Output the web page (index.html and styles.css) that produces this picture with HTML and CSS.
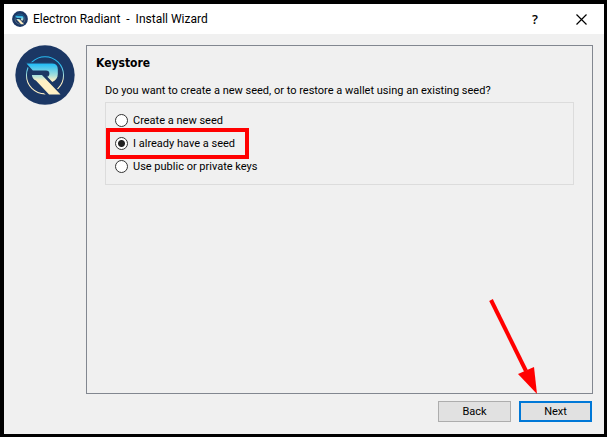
FILE: index.html
```html
<!DOCTYPE html>
<html lang="en">
<head>
    <meta charset="UTF-8">
    <title>Electron Radiant - Install Wizard</title>
    <link rel="stylesheet" href="styles.css">
</head>
<body>
    <svg class="defs" width="0" height="0" aria-hidden="true">
        <defs>
            <linearGradient id="shine" gradientUnits="userSpaceOnUse" x1="0" y1="50" x2="0" y2="158">
                <stop offset="0.2" stop-color="#27bdf5"/>
                <stop offset="0.5" stop-color="#a5dfdc"/>
                <stop offset="0.65" stop-color="#fff0c4"/>
            </linearGradient>
            <symbol id="logo" viewBox="16 14 178 178">
                <circle cx="105" cy="103" r="88" fill="#1b3764"/>
                <circle cx="105" cy="104" r="55" fill="none" stroke="url(#shine)" stroke-width="3"/>
                <path d="M46 67H126Q145 67 145 86V100Q145 118 126 126L108 107Q116 106 116 99Q116 92 108 92H68Z" fill="url(#shine)" stroke="#1b3764" stroke-width="4"/>
                <path d="M60 100H100L162 165H110L72 122Z" fill="#1b3764"/>
                <path d="M66 103H96L151 161H117L78 119Q68 116 66 103Z" fill="url(#shine)"/>
            </symbol>
        </defs>
    </svg>
    <div class="window">
        <header class="titlebar">
            <svg class="title-icon" aria-hidden="true"><use href="#logo"/></svg>
            <h1 class="title">Electron Radiant&nbsp; -&nbsp; Install Wizard</h1>
            <button class="title-btn" type="button" aria-label="Help">?</button>
            <button class="title-btn" type="button" aria-label="Close">
                <svg width="11" height="11" viewBox="0 0 11 11" aria-hidden="true">
                    <path d="M0.5 0.5L10.5 10.5M10.5 0.5L0.5 10.5" stroke="#000" stroke-width="1.2"/>
                </svg>
            </button>
        </header>
        <form class="wizard">
            <svg class="logo" aria-hidden="true"><use href="#logo"/></svg>
            <div class="main">
                <section class="panel">
                    <h2 class="heading">Keystore</h2>
                    <fieldset class="choices" aria-labelledby="question">
                        <p class="question" id="question">Do you want to create a new seed, or to restore a wallet using an existing seed?</p>
                        <div class="options">
                            <div class="option">
                                <input type="radio" name="keystore" id="create">
                                <label for="create">Create a new seed</label>
                            </div>
                            <div class="option marked">
                                <input type="radio" name="keystore" id="have" checked>
                                <label for="have">I already have a seed</label>
                            </div>
                            <div class="option">
                                <input type="radio" name="keystore" id="keys">
                                <label for="keys">Use public or private keys</label>
                            </div>
                        </div>
                    </fieldset>
                </section>
                <div class="buttons">
                    <button class="btn" type="button">Back</button>
                    <button class="btn btn-default" type="button">Next</button>
                    <svg class="arrow" width="52" height="98" viewBox="0 0 52 98" aria-hidden="true">
                        <path d="M5 3L40 74" stroke="#f00" stroke-width="4"/>
                        <path d="M51 97L32 77L48 70Z" fill="#f00"/>
                    </svg>
                </div>
            </div>
        </form>
    </div>
</body>
</html>
```
FILE: styles.css
```css
*{
    box-sizing: border-box;
    margin: 0;
    padding: 0;
}
body{
    min-height: 100vh;
    display: flex;
    padding: 4px 3px 3px 4px;
    background: #000;
    color: #000;
    font: 11px/14px Roboto, sans-serif;
}
.defs{
    position: absolute;
}
.window{
    flex: 1;
    display: flex;
    flex-direction: column;
    background: #f0f0f0;
}
.titlebar{
    height: 30px;
    display: flex;
    align-items: center;
    padding-left: 8px;
    background: #fff;
}
.title-icon{
    width: 16px;
    height: 16px;
}
.title{
    flex: 1;
    padding-left: 5px;
    font-size: 12px;
    font-weight: 400;
}
.title-btn{
    width: 46px;
    height: 30px;
    display: flex;
    align-items: center;
    justify-content: center;
    border: 0;
    background: none;
    font: 600 13px/16px "Open Sans", sans-serif;
}
.wizard{
    flex: 1;
    display: flex;
    align-items: flex-start;
    gap: 11px;
    padding: 11px;
}
.logo{
    flex: none;
    width: 60px;
    height: 60px;
}
.main{
    flex: 1;
    align-self: stretch;
    display: flex;
    flex-direction: column;
    gap: 7px;
}
.panel{
    flex: 1;
    padding: 10px 18px 10px 9px;
    border: 1px solid #828790;
}
.heading{
    font: bold 12px/14px "DejaVu Sans Condensed", "DejaVu Sans", sans-serif;
}
.choices{
    margin: 14px 0 0 9px;
    border: 0;
}
.question{
    margin-bottom: 4px;
}
.options{
    padding: 6px 9px;
    border: 1px solid #dcdcdc;
}
.option{
    position: relative;
    height: 23px;
    display: flex;
    align-items: center;
    gap: 5px;
}
.option input{
    appearance: none;
    width: 13px;
    height: 13px;
    border: 1px solid #333;
    border-radius: 50%;
    background: #fff;
}
.option input:checked{
    background: radial-gradient(circle, #222 3px, #fff 4px);
}
.marked::after{
    content: "";
    box-sizing: border-box;
    position: absolute;
    top: -4px;
    left: -9px;
    width: 143px;
    height: 31px;
    border: 4px solid #f00;
    pointer-events: none;
}
.buttons{
    position: relative;
    display: flex;
    justify-content: flex-end;
    gap: 8px;
    padding: 0 1px 1px 0;
}
.btn{
    width: 73px;
    height: 21px;
    border: 1px solid #adadad;
    background: #e1e1e1;
    color: #000;
    font: inherit;
}
.btn-default{
    border: 2px solid #0078d7;
}
.arrow{
    position: absolute;
    right: 55px;
    bottom: 28px;
    pointer-events: none;
}
```
